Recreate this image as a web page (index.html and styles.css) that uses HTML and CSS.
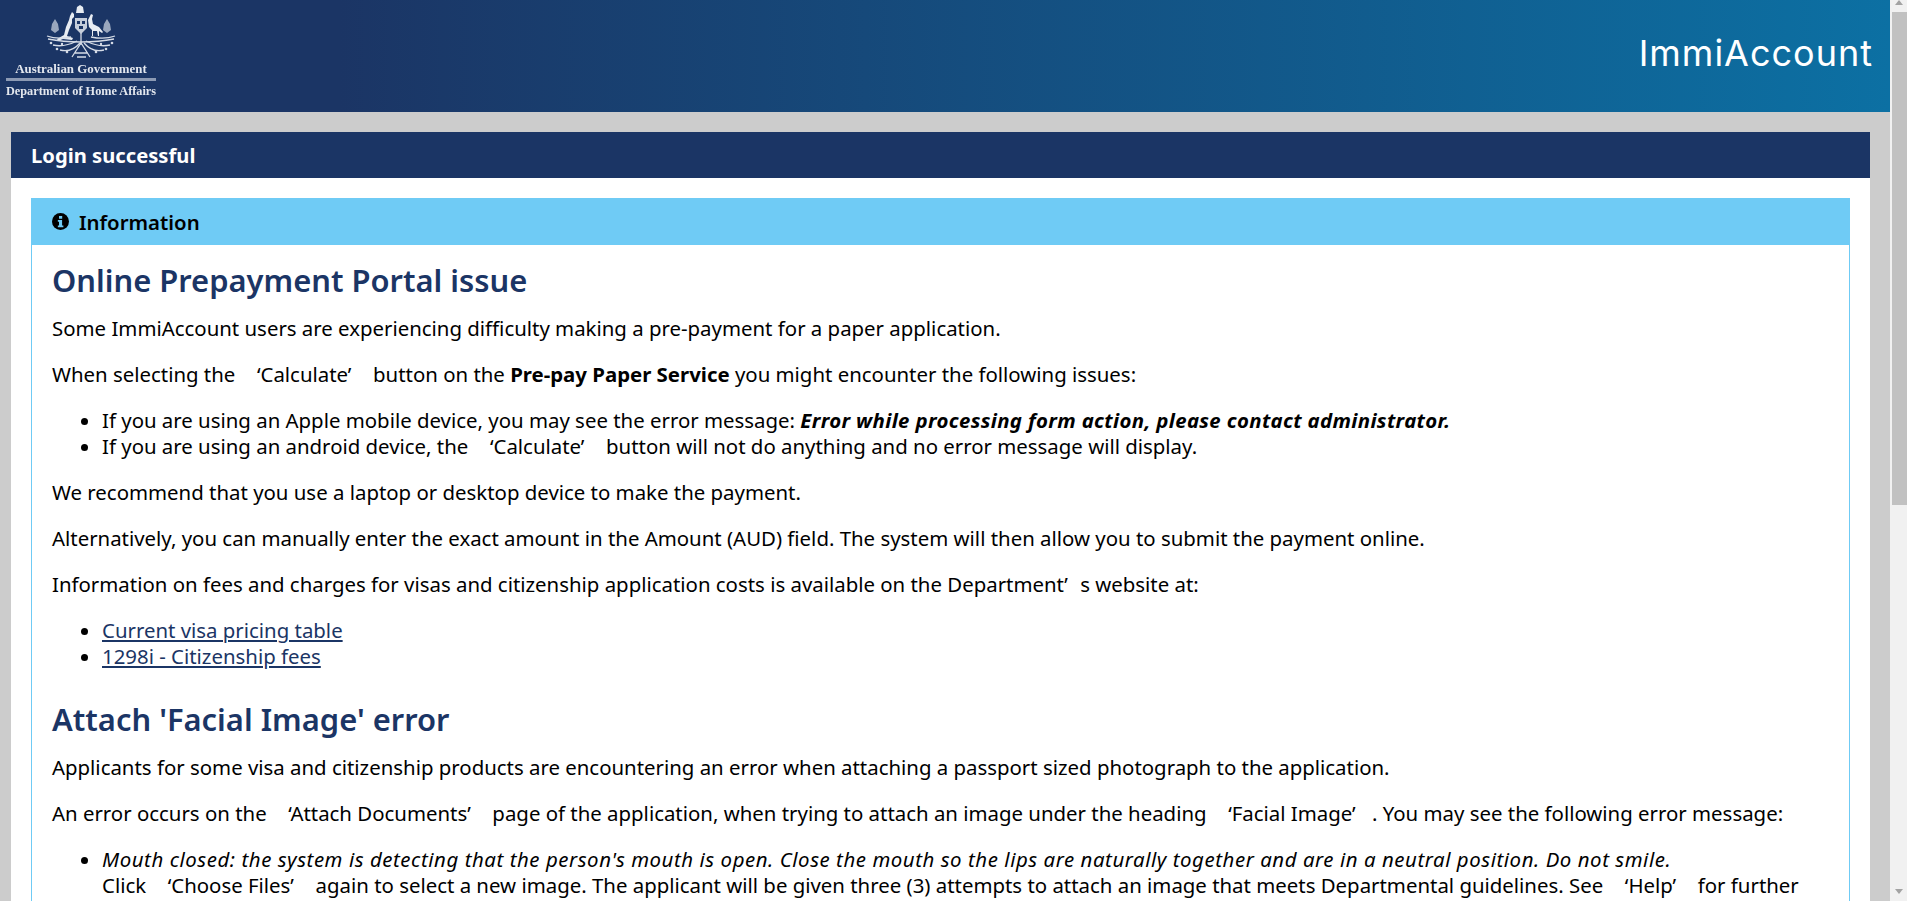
FILE: index.html
```html
<!DOCTYPE html>
<html lang="en">
<head>
<meta charset="utf-8">
<title>ImmiAccount</title>
<link rel="stylesheet" href="styles.css">
</head>
<body>
<div class="app">
  <div class="page">
    <header class="topbar">
      <div class="logo">
        <svg class="crest" viewBox="0 0 72 54" aria-hidden="true">
          <g fill="#e8ecf2">
            <path d="M31 2l3-2 3 2 1 6-8 0z"/>
            <path d="M26 7l2 2 0 3-2 2 0 4-3 7-2 6 6 2-1 2-9-1-5 2-1-2 7-4 2-8 3-7 1-4z"/>
            <path d="M45 9l2 1-1 4 1 5 6 3 4 5-1 1-3-2 0 5-1 0-1-5-4 0 0 5-1 0 0-6-3-3-1-7z"/>
          </g>
          <g fill="#c6cedb">
            <path d="M29 13h12v10l-6 6-6-6z"/>
            <path d="M9 14l3 5 1 6-4 3-4-3 1-6zM61 14l3 5 1 6-4 3-4-3 1-6z" opacity=".75"/>
          </g>
          <g fill="#1b3565">
            <rect x="31" y="16" width="3" height="3"/><rect x="36" y="16" width="3" height="3"/><rect x="33" y="21" width="4" height="3"/>
          </g>
          <g fill="none" stroke="#d5dbe6" stroke-width="1.3">
            <path d="M1 31c8 3 14 3 24 1M69 31c-8 3-14 3-24 1"/>
            <path d="M2 34c10 2 20 3 33 3 13 0 23-1 33-3"/>
            <path d="M7 40c8 2 16 0 24-4M64 40c-8 2-16 0-24-4"/>
            <path d="M14 45c8 2 14 0 20-7M58 45c-8 2-14 0-20-7"/>
            <path d="M26 52l9-14 9 14M29 48h13M31 52h9"/>
            <path d="M35 28v12"/>
          </g>
          <g fill="#d5dbe6">
            <circle cx="5" cy="38" r="1.3"/><circle cx="11" cy="44" r="1.3"/><circle cx="21" cy="47" r="1.3"/><circle cx="66" cy="38" r="1.3"/><circle cx="60" cy="44" r="1.3"/><circle cx="50" cy="47" r="1.3"/><circle cx="16" cy="39" r="1.2"/><circle cx="55" cy="39" r="1.2"/>
          </g>
        </svg>
        <div class="gov">Australian Government</div>
        <div class="dept">Department of Home Affairs</div>
      </div>
      <div class="brand">ImmiAccount</div>
    </header>

    <main class="panel">
      <h1 class="panel-head">Login successful</h1>
      <div class="panel-body">
        <section class="info">
          <h2 class="info-head">
            <svg class="info-icon" viewBox="0 0 16 16" aria-hidden="true"><circle cx="8" cy="8" r="8" fill="#000"/><rect x="6.6" y="2.8" width="3" height="2.6" fill="#6fcbf5"/><path d="M5.5 6.6h4v5.2h1.2v1.6H5.5v-1.6h1.1V8.2H5.5z" fill="#6fcbf5"/></svg>
            Information
          </h2>
          <div class="info-body">
            <h3>Online Prepayment Portal issue</h3>
            <p>Some ImmiAccount users are experiencing difficulty making a pre-payment for a paper application.</p>
            <p>When selecting the <span class="q">‘Calculate’</span> button on the <b>Pre-pay Paper Service</b> you might encounter the following issues:</p>
            <ul>
              <li>If you are using an Apple mobile device, you may see the error message: <b class="err"><i>Error while processing form action, please contact administrator.</i></b></li>
              <li>If you are using an android device, the <span class="q">‘Calculate’</span> button will not do anything and no error message will display.</li>
            </ul>
            <p>We recommend that you use a laptop or desktop device to make the payment.</p>
            <p>Alternatively, you can manually enter the exact amount in the Amount (AUD) field. The system will then allow you to submit the payment online.</p>
            <p>Information on fees and charges for visas and citizenship application costs is available on the Department<span class="apos">’</span>s website at:</p>
            <ul>
              <li><a href="#">Current visa pricing table</a></li>
              <li><a href="#">1298i - Citizenship fees</a></li>
            </ul>
            <h3>Attach 'Facial Image' error</h3>
            <p>Applicants for some visa and citizenship products are encountering an error when attaching a passport sized photograph to the application.</p>
            <p>An error occurs on the <span class="q">‘Attach Documents’</span> page of the application, when trying to attach an image under the heading <span class="q">‘Facial Image’</span>. You may see the following error message:</p>
            <ul>
              <li><i class="msg">Mouth closed: the system is detecting that the person's mouth is open. Close the mouth so the lips are naturally together and are in a neutral position. Do not smile.</i><br>
              Click <span class="q">‘Choose Files’</span> again to select a new image. The applicant will be given three (3) attempts to attach an image that meets Departmental guidelines. See <span class="q">‘Help’</span> for further information.</li>
            </ul>
          </div>
        </section>
      </div>
    </main>
  </div>
  <div class="scrollbar" aria-hidden="true">
    <div class="arrow-up"></div>
    <div class="thumb"></div>
    <div class="arrow-down"></div>
  </div>
</div>
</body>
</html>
```
FILE: styles.css
```css
* { box-sizing: border-box; }
html, body { margin: 0; height: 100%; overflow: hidden; }
body { font-family: "Noto Sans", "Open Sans", sans-serif; font-size: 20.4px; line-height: 26px; color: #000; background: #ccc; }

.app { display: flex; height: 901px; overflow: hidden; }
.page { flex: 1; min-width: 0; overflow: hidden; background: #ccc; }

.topbar { height: 112px; display: flex; justify-content: space-between; background: linear-gradient(90deg, #1b3565 0%, #1b3565 18%, #0c70a3 100%); }
.logo { width: 150px; margin-left: 6px; color: #e3e7ee; font-family: "Liberation Serif", serif; font-weight: bold; text-align: center; display: flex; flex-direction: column; filter: blur(.4px); }
.crest { width: 72px; height: 54px; margin: 5px 0 0 40px; display: block; }
.gov { font-size: 12.9px; line-height: 14px; margin-top: 3px; padding-bottom: 2px; border-bottom: 3px solid #8c9ab4; }
.dept { font-size: 12.25px; line-height: 14px; margin-top: 3px; white-space: nowrap; }
.brand { font-family: "Inter", "Open Sans", sans-serif; font-size: 36px; line-height: 42px; font-weight: 400; color: #fff; margin: 32px 17px 0 0; letter-spacing: 1px; }

.panel { margin: 20px 20px 0 11px; background: #fff; }
.panel-head { margin: 0; height: 46px; padding: 0 20px; background: #1b3565; color: #fff; font-size: 20.2px; line-height: 46px; font-weight: 700; }
.panel-body { padding: 20px 20px 0; }
.info { border: 1px solid #6fcbf5; border-top: 0; }
.info-head { margin: 0 -1px; height: 47px; padding: 0 21px; display: flex; align-items: center; gap: 10px; background: #6fcbf5; font-size: 20.4px; font-weight: 600; color: #000; }
.info-icon { width: 17px; height: 17px; flex: none; }
.info-body { padding: 0 20px; }

h3 { margin: 31px 0 16px; font-size: 30.9px; line-height: 38px; font-weight: 600; color: #1b3565; }
h3:first-child { margin-top: 16px; }
p { margin: 0 0 20px; }
ul { margin: 0 0 20px; padding-left: 50px; }
a { color: #1b3565; }
.q { margin: 0 .8em; }
.apos { margin-right: .6em; }
.err { letter-spacing: .35px; }
.msg { letter-spacing: .56px; }

.scrollbar { flex: none; width: 17px; padding-left: 2px; background: #f1f1f1; display: flex; flex-direction: column; }
.arrow-up { width: 8px; height: 5px; margin: 0 0 7px 3px; border-left: 4px solid transparent; border-right: 4px solid transparent; border-bottom: 5px solid #a3a3a3; }
.thumb { width: 15px; height: 493px; background: #c1c1c1; }
.arrow-down { width: 8px; height: 5px; margin: auto 0 7px 3px; border-left: 4px solid transparent; border-right: 4px solid transparent; border-top: 5px solid #a3a3a3; }
```
